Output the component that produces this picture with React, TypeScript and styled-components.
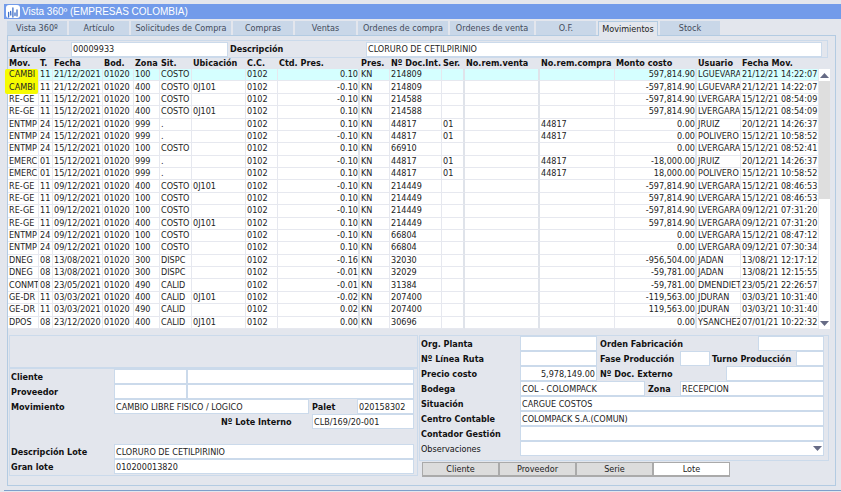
import React from 'react';
import styled, { createGlobalStyle, css } from 'styled-components';

const c = {
  bg: '#e3e6ed',
  tab: '#c9d7e8',
  line: '#b3cbe2',
  field: '#cbdaeb',
  grid: '#e6e8ef',
  gridDark: '#dfe3ea',
  title: '#729bea',
};

const Global = createGlobalStyle`
  * { box-sizing: border-box; }
  body { margin: 0; background: ${c.bg}; }
  body, button, input, select { font-family: 'DejaVu Sans Condensed', 'DejaVu Sans', sans-serif; font-size: 9px; line-height: 12px; color: #222; }
`;

const Window = styled.div`
  min-height: 100vh;
  padding: 4px 0 0 4px;
  display: flex;
  flex-direction: column;
`;

const TitleBar = styled.header`
  height: 15px;
  padding-left: 2px;
  background: ${c.title};
  display: flex;
  align-items: center;
  gap: 2px;
`;

const Title = styled.h1`
  margin: 0;
  font: 400 10px/14px 'Liberation Sans', Arial, sans-serif;
  color: #fff;
`;

const Body = styled.main`
  flex: 1;
  border-bottom: 1px solid #7f9fca;
  padding: 2px 5px 4px 3px;
  margin-bottom: 1px;
`;

const Tabs = styled.nav`
  display: flex;
  height: 14px;
`;

const Tab = styled.button<{ $w: number; $on?: boolean }>`
  width: ${p => p.$w}px;
  height: 14px;
  padding: 0;
  margin-right: 2px;
  border: 0;
  background: ${c.tab};
  color: #444c5c;
  ${p => p.$on && css`
    height: 15px;
    border: 1px solid ${c.line};
    border-bottom: 0;
    background: ${c.bg};
    color: #222;
    z-index: 1;
  `}
`;

const Sheet = styled.section`
  border: 1px solid ${c.line};
  padding: 4px 5px 8px 0;
`;

const Search = styled.div`
  display: flex;
  align-items: center;
  height: 18px;
  border: 1px solid ${c.field};
  border-left: 0;
  padding: 0 5px 0 2px;
  margin-right: 2px;
`;

const Label = styled.label<{ $w?: number; $plain?: boolean; $pad?: number }>`
  flex: none;
  width: ${p => (p.$w ? p.$w + 'px' : 'auto')};
  padding-left: ${p => p.$pad ?? 0}px;
  font-weight: ${p => (p.$plain ? 400 : 700)};
  color: #111;
  white-space: nowrap;
`;

const Field = styled.input<{ $w?: number; $right?: boolean }>`
  ${p => (p.$w ? css`width: ${p.$w}px; flex: none;` : css`flex: 1; width: 0; min-width: 0;`)}
  height: 15px;
  padding: 0 1px;
  border: 1px solid ${c.field};
  border-radius: 0;
  background: #fff;
  outline: 0;
  text-align: ${p => (p.$right ? 'right' : 'left')};
`;

const GridArea = styled.div`
  position: relative;
  display: flex;
`;

const Marker = styled.div`
  position: absolute;
  top: 11px;
  left: -3px;
  width: 33px;
  height: 25px;
  border-radius: 2px;
  background: #f6fb00;
  pointer-events: none;
`;

const Table = styled.table`
  flex: 1;
  width: 0;
  height: 271px;
  z-index: 1;
  table-layout: fixed;
  border-collapse: separate;
  border-spacing: 0;
`;

const Th = styled.th`
  height: 11px;
  padding: 0 0 0 1px;
  line-height: 11px;
  text-align: left;
  white-space: nowrap;
  color: #111;
`;

const Td = styled.td<{ $right?: boolean; $edge?: boolean; $mark?: boolean; $sel?: boolean }>`
  padding: 0 0 0 1px;
  line-height: 11px;
  overflow: hidden;
  white-space: nowrap;
  background: ${p => (p.$mark ? 'transparent' : p.$sel ? '#d5ffff' : '#fff')};
  border-bottom: 1px solid ${p => (p.$mark ? 'transparent' : c.grid)};
  border-right: ${p => (p.$edge ? `2px solid ${c.gridDark}` : `1px solid ${c.grid}`)};
  text-align: ${p => (p.$right ? 'right' : 'left')};
`;

const Scroll = styled.div`
  width: 11px;
  margin-top: 11px;
  display: flex;
  flex-direction: column;
  background: #fff;
`;

const ScrollButton = styled.button`
  height: 12px;
  padding: 0;
  border: 0;
  background: #fff;
  display: flex;
  align-items: center;
  justify-content: center;
`;

const Thumb = styled.div`
  height: 118px;
  background: #dedede;
`;

const Track = styled.div`
  flex: 1;
`;

const Bottom = styled.div`
  display: grid;
  grid-template-columns: 411fr 412fr;
  padding-top: 6px;
  margin-right: 1px;
`;

const LeftPane = styled.div`
  display: flex;
  flex-direction: column;
  align-self: start;
  border: 1px solid ${c.field};
  margin-left: 1px;
`;

const Blank = styled.div`
  height: 33px;
  border-bottom: 2px solid ${c.field};
`;

const LeftForm = styled.form`
  padding: 0 3px 1px 1px;
  display: flex;
  flex-direction: column;
`;

const RightPane = styled.div`
  padding-left: 1px;
`;

const RightForm = styled.form`
  border: 1px solid ${c.field};
  padding: 0 4px 4px 0;
  display: flex;
  flex-direction: column;
`;

const Row = styled.div<{ $end?: boolean }>`
  display: flex;
  align-items: center;
  height: 15px;
  justify-content: ${p => (p.$end ? 'flex-end' : 'flex-start')};
`;

const Gap = styled.div<{ $h: number }>`
  height: ${p => p.$h}px;
`;

const Spacer = styled.div`
  flex: 1;
`;

const SelectBox = styled.div`
  flex: 1;
  height: 15px;
  display: grid;
  align-items: center;
  background: #fff;
  border: 1px solid ${c.field};
  & > * { grid-area: 1 / 1; }
  & > svg { justify-self: end; margin-right: 1px; pointer-events: none; }
`;

const Select = styled.select`
  appearance: none;
  height: 13px;
  border: 0;
  background: transparent;
  outline: 0;
`;

const Buttons = styled.div`
  display: flex;
  padding: 1px 0 0 3px;
`;

const Button = styled.button<{ $on?: boolean }>`
  width: 77px;
  height: 15px;
  padding: 0 0 2px;
  border: 1px solid #aaa;
  border-width: 1px 1px 2px;
  background: ${p => (p.$on ? '#fff' : '#dcdcdc')};
`;

const tabs: [string, number][] = [
  ['Vista 360º', 60], ['Artículo', 60], ['Solicitudes de Compra', 100], ['Compras', 60], ['Ventas', 61],
  ['Ordenes de compra', 90], ['Ordenes de venta', 84], ['O.F.', 60], ['Movimientos', 60], ['Stock', 60],
];

const columns: [string, number][] = [
  ['Mov.', 31], ['T.', 14], ['Fecha', 50], ['Bod.', 31], ['Zona', 26], ['Sit.', 32], ['Ubicación', 54], ['C.C.', 32],
  ['Ctd. Pres.', 82], ['Pres.', 30], ['Nº Doc.Int.', 52], ['Ser.', 23], ['No.rem.venta', 75], ['No.rem.compra', 75],
  ['Monto costo', 82], ['Usuario', 44], ['Fecha Mov.', 78],
];

const data = `CAMBI|11|21/12/2021|100|COSTO||0.10|214809|||597,814.90|LGUEVARA|21/12/21 14:22:07
CAMBI|11|21/12/2021|400|COSTO|0J101|-0.10|214809|||-597,814.90|LGUEVARA|21/12/21 14:22:07
RE-GE|11|15/12/2021|100|COSTO||-0.10|214588|||-597,814.90|LVERGARA|15/12/21 08:54:09
RE-GE|11|15/12/2021|400|COSTO|0J101|0.10|214588|||597,814.90|LVERGARA|15/12/21 08:54:09
ENTMP|24|15/12/2021|999|.||0.10|44817|01|44817|0.00|JRUIZ|20/12/21 14:26:37
ENTMP|24|15/12/2021|999|.||-0.10|44817|01|44817|0.00|POLIVERO|15/12/21 10:58:52
ENTMP|24|15/12/2021|100|COSTO||0.10|66910|||0.00|LVERGARA|15/12/21 08:52:41
EMERC|01|15/12/2021|999|.||-0.10|44817|01|44817|-18,000.00|JRUIZ|20/12/21 14:26:37
EMERC|01|15/12/2021|999|.||0.10|44817|01|44817|18,000.00|POLIVERO|15/12/21 10:58:52
RE-GE|11|09/12/2021|400|COSTO|0J101|-0.10|214449|||-597,814.90|LVERGARA|15/12/21 08:46:53
RE-GE|11|09/12/2021|100|COSTO||0.10|214449|||597,814.90|LVERGARA|15/12/21 08:46:53
RE-GE|11|09/12/2021|100|COSTO||-0.10|214449|||-597,814.90|LVERGARA|09/12/21 07:31:20
RE-GE|11|09/12/2021|400|COSTO|0J101|0.10|214449|||597,814.90|LVERGARA|09/12/21 07:31:20
ENTMP|24|09/12/2021|100|COSTO||-0.10|66804|||0.00|LVERGARA|15/12/21 08:47:12
ENTMP|24|09/12/2021|100|COSTO||0.10|66804|||0.00|LVERGARA|09/12/21 07:30:34
DNEG|08|13/08/2021|300|DISPC||-0.16|32030|||-956,504.00|JADAN|13/08/21 12:17:12
DNEG|08|13/08/2021|300|DISPC||-0.01|32029|||-59,781.00|JADAN|13/08/21 12:15:55
CONMT|08|23/05/2021|490|CALID||-0.01|31384|||-59,781.00|DMENDIET|23/05/21 22:26:57
GE-DR|11|03/03/2021|400|CALID|0J101|-0.02|207400|||-119,563.00|JDURAN|03/03/21 10:31:40
GE-DR|11|03/03/2021|490|CALID||0.02|207400|||119,563.00|JDURAN|03/03/21 10:31:40
DPOS|08|23/12/2020|400|CALID|0J101|0.00|30696|||0.00|YSANCHEZ|07/01/21 10:22:32`;

const rows = data.split('\n').map(line => {
  const [mov, t, date, zone, sit, ubi, qty, doc, ser, remCompra, cost, user, when] = line.split('|');
  return [mov, t, date, '01020', zone, sit, ubi, '0102', qty, 'KN', doc, ser, '', remCompra, cost, user, when];
});

const Arrow = ({ up }: { up?: boolean }) => (
  <svg width="9" height="5" viewBox="0 0 9 5" aria-hidden="true">
    <path d={up ? 'M0 5 4.5 0 9 5Z' : 'M0 0H9L4.5 5Z'} fill="#666b85" />
  </svg>
);

const Logo = () => (
  <svg width="14" height="13" viewBox="0 0 14 13" aria-hidden="true">
    <rect width="14" height="13" rx="3" fill="#fff" />
    <path
      d="M2.6 7.5V12M4.6 6.5Q4.8 8 4.8 10M6.9 3V12M9 8V10.5M11 5V11"
      stroke="#3f6fc8"
      strokeWidth="1.3"
      strokeLinecap="round"
      fill="none"
    />
  </svg>
);

type EntryProps = { id: string; label: string; lw?: number; pad?: number; w?: number; value?: string; right?: boolean };

const Entry = ({ id, label, lw, pad, w, value = '', right }: EntryProps) => (
  <>
    <Label htmlFor={id} $w={lw} $pad={pad}>{label}</Label>
    <Field id={id} $w={w} $right={right} defaultValue={value} />
  </>
);

export default function App() {
  return (
    <Window>
      <Global />
      <TitleBar>
        <Logo />
        <Title>Vista 360º (EMPRESAS COLOMBIA)</Title>
      </TitleBar>
      <Body>
        <Tabs>
          {tabs.map(([name, w]) => <Tab key={name} $w={w} $on={name === 'Movimientos'}>{name}</Tab>)}
        </Tabs>
        <Sheet>
          <Search>
            <Entry id="articulo" label="Artículo" lw={61} w={157} value="00009933" />
            <Entry id="descripcion" label="Descripción" lw={138} pad={2} value="CLORURO DE CETILPIRINIO" />
          </Search>
          <GridArea>
            <Marker />
            <Table>
              <colgroup>
                {columns.map(([name, w]) => <col key={name} width={w} />)}
              </colgroup>
              <thead>
                <tr>{columns.map(([name]) => <Th key={name} scope="col">{name}</Th>)}</tr>
              </thead>
              <tbody>
                {rows.map((row, i) => (
                  <tr key={i}>
                    {row.map((v, j) => (
                      <Td
                        key={j}
                        $right={j === 8 || j === 14}
                        $edge={j === 8 || j === 11 || j === 12 || j === 14}
                        $mark={j === 0 && i < 2}
                        $sel={i === 0}
                      >{v}</Td>
                    ))}
                  </tr>
                ))}
              </tbody>
            </Table>
            <Scroll>
              <ScrollButton aria-label="Subir"><Arrow up /></ScrollButton>
              <Thumb />
              <Track />
              <ScrollButton aria-label="Bajar"><Arrow /></ScrollButton>
            </Scroll>
          </GridArea>
          <Bottom>
            <LeftPane>
              <Blank />
              <LeftForm>
                <Row>
                  <Entry id="cliente" label="Cliente" lw={103} w={73} />
                  <Field aria-label="Nombre del cliente" />
                </Row>
                <Row>
                  <Entry id="proveedor" label="Proveedor" lw={103} w={73} />
                  <Field aria-label="Nombre del proveedor" />
                </Row>
                <Row>
                  <Entry id="movimiento" label="Movimiento" lw={103} value="CAMBIO LIBRE FISICO / LOGICO" />
                  <Entry id="palet" label="Palet" lw={48} pad={3} w={57} value="020158302" />
                </Row>
                <Row $end>
                  <Entry id="lote-interno" label="Nº Lote Interno" lw={91} w={102} value="CLB/169/20-001" />
                </Row>
                <Gap $h={15} />
                <Row>
                  <Entry id="desc-lote" label="Descripción Lote" lw={103} value="CLORURO DE CETILPIRINIO" />
                </Row>
                <Row>
                  <Entry id="gran-lote" label="Gran lote" lw={103} value="010200013820" />
                </Row>
              </LeftForm>
            </LeftPane>
            <RightPane>
              <RightForm>
                <Row>
                  <Entry id="org" label="Org. Planta" lw={100} pad={1} w={77} />
                  <Label htmlFor="orden" $pad={3}>Orden Fabricación</Label>
                  <Spacer />
                  <Field id="orden" $w={66} />
                </Row>
                <Row>
                  <Entry id="linea" label="Nº Línea Ruta" lw={100} pad={1} w={77} />
                  <Entry id="fase" label="Fase Producción" lw={83} pad={3} w={30} />
                  <Entry id="turno" label="Turno Producción" lw={86} pad={2} />
                </Row>
                <Row>
                  <Entry id="precio" label="Precio costo" lw={100} pad={1} w={77} value="5,978,149.00" right />
                  <Label htmlFor="externo" $pad={3}>Nº Doc. Externo</Label>
                  <Spacer />
                  <Field id="externo" $w={98} />
                </Row>
                <Row>
                  <Entry id="bodega" label="Bodega" lw={100} pad={1} w={125} value="COL - COLOMPACK" />
                  <Entry id="zona" label="Zona" lw={35} pad={3} value="RECEPCION" />
                </Row>
                <Row><Entry id="situacion" label="Situación" lw={100} pad={1} value="CARGUE COSTOS" /></Row>
                <Row><Entry id="centro" label="Centro Contable" lw={100} pad={1} value="COLOMPACK S.A.(COMUN)" /></Row>
                <Row><Entry id="contador" label="Contador Gestión" lw={100} pad={1} /></Row>
                <Row>
                  <Label htmlFor="obs" $w={100} $pad={1} $plain>Observaciones</Label>
                  <SelectBox>
                    <Select id="obs"><option></option></Select>
                    <Arrow />
                  </SelectBox>
                </Row>
              </RightForm>
              <Buttons>
                <Button>Cliente</Button>
                <Button>Proveedor</Button>
                <Button>Serie</Button>
                <Button $on>Lote</Button>
              </Buttons>
            </RightPane>
          </Bottom>
        </Sheet>
      </Body>
    </Window>
  );
}
